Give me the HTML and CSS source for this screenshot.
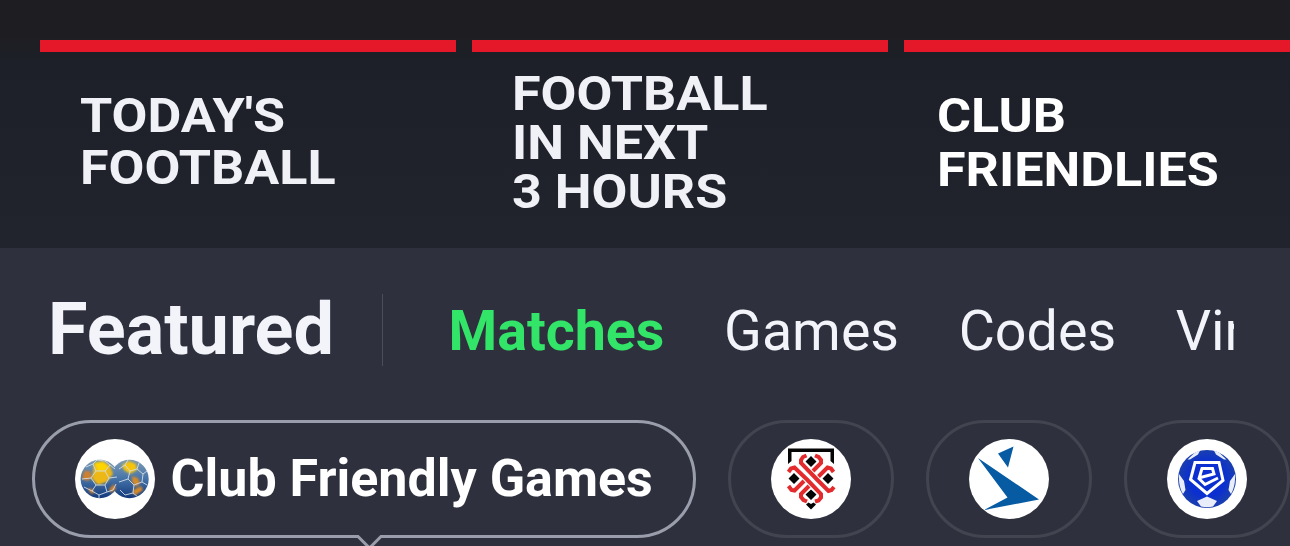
FILE: index.html
```html
<!DOCTYPE html>
<html lang="en">

<head>
    <meta charset="UTF-8">
    <meta name="viewport" content="width=device-width, initial-scale=1.0">
    <title>Featured</title>
    <link rel="stylesheet" href="styles.css">
</head>

<body>
    <div class="tiles">
        <a class="tile tile-today"><span>TODAY'S<br>FOOTBALL</span></a>
        <a class="tile tile-next"><span>FOOTBALL<br>IN NEXT<br>3 HOURS</span></a>
        <a class="tile tile-club"><span>CLUB<br>FRIENDLIES</span></a>
    </div>

    <section class="featured">
        <div class="featured-header">
            <h2 class="featured-title">Featured</h2>
            <nav class="tabs">
                <a class="tab active">Matches</a>
                <a class="tab">Games</a>
                <a class="tab">Codes</a>
                <a class="tab">Virtuals</a>
            </nav>
        </div>

        <div class="pills">
            <div class="pill active">
                <svg class="badge" viewBox="0 0 80 80">
                    <defs>
                        <linearGradient id="ball-fill" x1="0" y1="0" x2="0" y2="1">
                            <stop offset="0" stop-color="#7f9cb4" />
                            <stop offset="0.5" stop-color="#4573a8" />
                            <stop offset="1" stop-color="#12397c" />
                        </linearGradient>
                        <filter id="soft" x="-20%" y="-20%" width="140%" height="140%">
                            <feGaussianBlur stdDeviation="1" />
                        </filter>
                    </defs>
                    <circle cx="40" cy="40" r="40" fill="#fff" />
                    <circle cx="54.5" cy="40" r="19.2" fill="url(#ball-fill)" />
                    <g filter="url(#soft)">
                        <path d="M47 26l7-4 7 3 1 6-7 4-6-4z" fill="#f6c40c" />
                        <path d="M57 37l6 2 2 5-4 4-4-5zM58 51l8-4 2 4-7 5-3-1z" fill="#d58a2c" />
                    </g>
                    <g class="seams">
                        <path d="M50 26l5 6 7-2 2-6M55 32l-2 8 6 6 8-3 1-8-6-5M59 46l-1 8 5 4M67 43l5 3M68 35l4-3M53 40l-9 3M58 54l-8 2-5-5M50 26l-6 4M50 26l3-5" />
                    </g>
                    <circle cx="24.8" cy="40" r="19.2" fill="url(#ball-fill)" />
                    <g filter="url(#soft)">
                        <path d="M19 24l9-2 7 5 3 8-6 8-9 3-6-6 1-7z" fill="#edb817" />
                        <path d="M19 24l9-1 5 4-3 5-7 0z" fill="#ffd500" />
                        <path d="M9 32l6 0 2 6-4 4-6-2zM34 50l5-5 2 5-5 4zM13 49l5 1 1 5-4-1z" fill="#cf802f" />
                    </g>
                    <g class="seams">
                        <path d="M18 25l3 7 9 0 5-6-5-4-8-1zM21 32l-5 7 5 7 9 0 4-7-4-7M16 39l-9 1M34 39l8-1M35 26l5 4M18 25l-7 3M21 46l-4 6 7 4 8-3-2-7M17 52l-8-4M24 56v3M32 53l6-2 3-6" />
                    </g>
                </svg>
                <span class="pill-label">Club Friendly Games</span>
                <svg class="pointer" viewBox="0 0 32 16">
                    <path class="pointer-fill" d="M5 0L17.5 12.5 30 0z" />
                    <path class="pointer-line" d="M4.5 1.5H6L17.5 13 29 1.5h1.5" />
                </svg>
            </div>
            <div class="pill">
                <svg class="badge" viewBox="0 0 80 80">
                    <circle cx="40" cy="40" r="40" fill="#fff" />
                    <path d="M17 25V9.5h46V25l-3.5-3V13h-39v9z" fill="#050505" />
                    <g class="knot">
                        <path d="M35.5 16.5l-3.5 1.500-2 3v3l16.500 17L57.500 52l3-1 2.500-3" />
                        <path d="M17.500 33l2.500-3.500 3.500-1L36 40.500 50 55v3.500l-2.500 3-3.500 1" />
                        <path d="M44 16.500l3.500 1.500 2.500 3v3l-8 8M62.500 33L60 29.500l-3.500-1-9 9" />
                        <path d="M17.500 47l3 4 3 .5 9.500-9.500M36 62.500l-3.500-1.500-2.500-3V55l8-8" />
                    </g>
                    <path d="M40 17l5.500 5.500L40 28l-5.500-5.500zM23 34l5.500 5.500L23 45l-5.500-5.500zM57 34l5.500 5.500L57 45l-5.500-5.500zM40 50.500l5.500 5L40 61l-5.500-5.500zM37.500 63.500l2.500 1.500 2.500-1.500 2.500 2-5 5-5-5z" fill="#050505" />
                </svg>
            </div>
            <div class="pill">
                <svg class="badge" viewBox="0 0 80 80">
                    <circle cx="40" cy="40" r="40" fill="#fff" />
                    <path d="M29 14.5L44.5 7.500 39 28.500zM9 19L70 60.500 15 71 38.500 58.500z" fill="#075ba3" />
                </svg>
            </div>
            <div class="pill">
                <svg class="badge" viewBox="0 0 80 80">
                    <defs>
                        <radialGradient id="league-fill">
                            <stop offset="0.6" stop-color="#0b2fd0" />
                            <stop offset="1" stop-color="#1a3fae" />
                        </radialGradient>
                    </defs>
                    <circle cx="40" cy="40" r="40" fill="#fff" />
                    <circle cx="40" cy="40" r="29" fill="url(#league-fill)" />
                    <path d="M20.500 20.500l7.500-7 5-2 -2 4-8 5zM59.500 20.500l-7.500-7-5-2 2 4 8 5zM12 35l5 7 1.500 9-2.500 4c-3-5-4.500-12-4-20zM68 35l-5 7-1.500 9 2.500 4c3-5 4.500-12 4-20zM30 62l10-4.500L50 62l-4 5.500q-6 1.500-12 0z" fill="#e9edf9" />
                    <path class="league-line" d="M28 23.500H52L56 41.500 40 54.500 23.500 40.500z" />
                    <path class="league-line" d="M33.500 38.500l13.500-3.500-1.500-5.500H35L32 39.500l6 6 13-6.500" />
                </svg>
            </div>
        </div>
    </section>
</body>

</html>
```
FILE: styles.css
```css
body {
    font-family: Roboto, "Liberation Sans", sans-serif;
    margin: 0;
    background: #2e313d;
    color: #f2f4fa;
}

.tiles {
    box-sizing: border-box;
    display: flex;
    gap: 16px;
    height: 248px;
    padding: 40px 0 16px 40px;
    background: linear-gradient(180deg, #1e1e22 0, #1e1e22 36px, #1d2029 65px, #22242d 248px);
    overflow: hidden;
}

.tile {
    box-sizing: border-box;
    flex: 0 0 416px;
    display: flex;
    align-items: center;
    padding-left: 40px;
    border-top: 12px solid #e5182a;
    font-size: 48px;
    font-weight: 700;
    line-height: 52px;
    color: #f0f1f6;
}

/* wide caps */
.tile span {
    transform: scaleX(1.085);
    transform-origin: left;
}

.tile-next {
    line-height: 49px;
}

.tile-club {
    line-height: 54px;
    padding-left: 33px;
    padding-top: 2px;
    color: #fff;
}

.featured-header {
    display: flex;
    align-items: center;
    height: 164px;
    padding: 0 56px 0 48px;
}

.featured-title {
    flex: none;
    margin: 0;
    padding-right: 48px;
    border-right: 1px solid #4b4e59;
    font-size: 72px;
    font-weight: 700;
    line-height: 72px;
}

.tabs {
    flex: 1;
    display: flex;
    gap: 59.6px;
    margin-left: 65.5px;
    padding-top: 2px;
    overflow: hidden;
}

.tab {
    flex: none;
    font-size: 55.6px;
    line-height: 72px;
}

.tab.active {
    font-weight: 700;
    color: #32e568;
}

.pills {
    box-sizing: border-box;
    display: flex;
    align-items: flex-start;
    gap: 32px;
    height: 134px;
    padding: 8px 0 0 32px;
    overflow: hidden;
}

.pill {
    position: relative;
    flex: none;
    display: flex;
    align-items: center;
    padding: 16px 40px;
    border: 3px solid #424550;
    border-radius: 59px;
}

.pill.active {
    border-color: #9a9dab;
}

.badge {
    display: block;
    width: 80px;
    height: 80px;
}

.pill-label {
    margin-left: 15.5px;
    font-size: 52px;
    font-weight: 700;
    line-height: 72px;
    color: #fff;
}

.pointer {
    position: absolute;
    left: 317px;
    bottom: -16px;
    width: 32px;
    height: 16px;
}

.pointer-fill {
    fill: #2e313d;
}

.pointer-line {
    fill: none;
    stroke: #9a9dab;
    stroke-width: 3;
}

.seams {
    fill: none;
    stroke: #d3dce3;
    stroke-width: 0.9;
}

.knot {
    fill: none;
    stroke: #e32a2c;
    stroke-width: 4;
}

.league-line {
    fill: none;
    stroke: #fff;
    stroke-width: 3;
}
```
